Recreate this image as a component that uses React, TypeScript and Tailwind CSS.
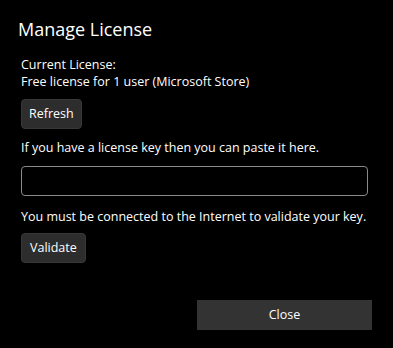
export default function App() {
  return (
    <div className="h-[348px] w-[393px] bg-black text-white" style={{ fontFamily: '"Open Sans", "Noto Sans", sans-serif' }}>
      <div className="flex flex-col px-[21px] pt-[15px]">
        <h1 className="-ml-[3px] text-[18px] leading-[28px] text-white">Manage License</h1>

        <div className="mt-[13px] text-[12.5px] leading-[17px]">
          <div>Current License:</div>
          <div>Free license for 1 user (Microsoft Store)</div>
        </div>

        <div className="mt-[9px]">
          <button className="h-[30px] rounded-[4px] border border-[#383838] bg-[#2d2d2d] px-[7px] text-[12.5px] text-white">
            Refresh
          </button>
        </div>

        <p className="mt-[10px] text-[12.5px] leading-[17px]">If you have a license key then you can paste it here.</p>

        <input
          className="mt-[10px] h-[30px] w-[347px] rounded-[4px] border border-[#8a8a8a] bg-black px-2 text-[12.5px] text-white outline-none"
          type="text"
        />

        <p className="mt-[12px] whitespace-nowrap text-[12.5px] leading-[17px]">
          You must be connected to the Internet to validate your key.
        </p>

        <div className="mt-[8px]">
          <button className="h-[30px] rounded-[4px] border border-[#383838] bg-[#2d2d2d] px-[8px] text-[12.5px] text-white">
            Validate
          </button>
        </div>

        <div className="mt-[37px] flex justify-end">
          <button className="h-[30px] w-[175px] bg-[#333333] text-[12.5px] text-white">Close</button>
        </div>
      </div>
    </div>
  );
}
